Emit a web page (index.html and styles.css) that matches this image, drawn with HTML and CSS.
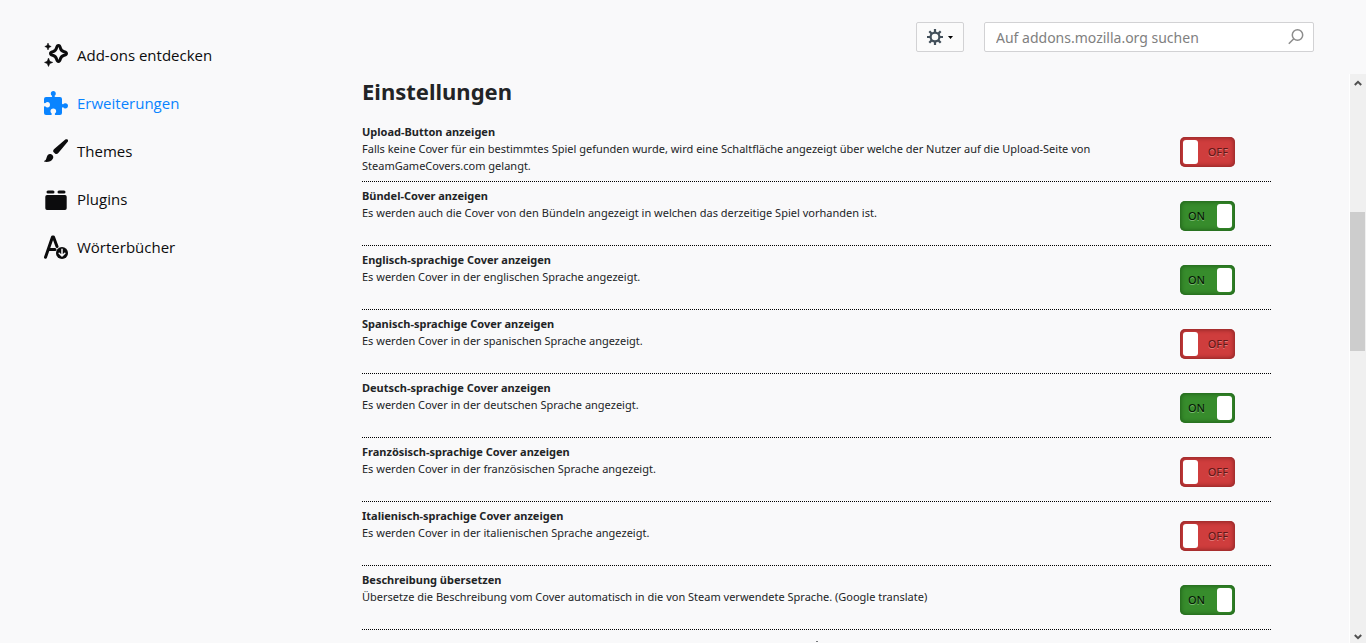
FILE: index.html
```html
<!DOCTYPE html>
<html lang="de">
<head>
<meta charset="utf-8">
<meta name="viewport" content="width=device-width, initial-scale=1">
<title>Einstellungen</title>
<link rel="stylesheet" href="styles.css">
</head>
<body>
<nav class="categories">
  <a class="category" href="#entdecken">
    <svg class="category-icon" viewBox="0 0 24 24"><path d="M14.500 2.500 C15.600 2.500 16 3.500 16.300 4.700 C16.800 7.200 18 8.200 20.200 8.700 C21.800 9.100 22.500 9.600 22.500 10.500 C22.500 11.400 21.700 11.900 20.200 12.300 C18 12.900 16.900 13.900 16.300 16.200 C15.900 17.700 15.500 18.500 14.500 18.500 C13.500 18.500 13 17.700 12.600 16.200 C12 13.900 11 12.900 8.700 12.300 C7.300 11.900 6.500 11.400 6.500 10.500 C6.500 9.600 7.300 9 8.700 8.700 C11 8.100 12.100 7.100 12.600 4.700 C12.900 3.500 13.400 2.500 14.500 2.500Z" fill="none" stroke="currentColor" stroke-width="3"/><path d="M4 0 5 2.600 7.200 3.500 5 4.400 4 7 3 4.400 .8 3.500 3 2.600ZM4.500 15 5.800 18.200 8.800 19.400 5.800 20.600 4.500 23.500 3.200 20.600 .5 19.400 3.200 18.200Z" fill="currentColor" stroke="currentColor" stroke-width=".5"/></svg>
    <span>Add-ons entdecken</span>
  </a>
  <a class="category selected" href="#erweiterungen" aria-current="page">
    <svg class="category-icon" viewBox="0 0 24 24"><path fill="currentColor" d="M0 8 Q0 6 2 6H7.500Q8.500 6 8 4.800 6.800 4.200 6.800 2.700C6.800 1 7.800 0 9.300 0S11.800 1 11.800 2.700Q11.800 4.200 10.600 4.800 10.400 6 11.500 6H16Q18 6 18 8V12.500Q18 13.500 19.200 13.300 19.800 12.200 21.300 12.200C23 12.200 24 13.200 24 14.800S23 17.400 21.300 17.400Q19.800 17.400 19.200 16.200 18 16 18 17V22Q18 24 16 24H11.500Q10.600 24 10.900 22.500 12.200 21.800 12.200 20.300C12.200 18.500 11 17.500 9.300 17.500S6.500 18.500 6.500 20.300Q6.500 21.800 7.700 22.500 8 24 7 24H2Q0 24 0 22V16Q0 15 1.500 15.500 2.200 16.500 3.500 16.500C5.200 16.500 6 15.400 6 13.800S5.200 11 3.500 11Q2.200 11 1.500 12 0 12.500 0 11.500Z"/></svg>
    <span>Erweiterungen</span>
  </a>
  <a class="category" href="#themes">
    <svg class="category-icon" viewBox="0 0 24 24"><path fill="currentColor" d="M23.500.5C24.300 1.200 24.200 2 23.700 2.800L14.500 13.800C13.500 15 12 15.500 11 14.500L9.700 13.300C8.800 12.300 9 11 10.200 9.900L21.300.5C22 0 22.900 0 23.500.5ZM7.200 15.200C9.200 16.200 9.800 17.600 8.800 19.800 7.500 22.500 4 23.200 .6 22.800 0 22.700 0 22 .5 21.800 2 21.200 2.200 20 2.800 18 3.500 15.500 5.100 14.400 7.200 15.200Z"/></svg>
    <span>Themes</span>
  </a>
  <a class="category" href="#plugins">
    <svg class="category-icon" viewBox="0 0 24 24"><path fill="currentColor" d="M4 3.500H9Q10.500 3.500 10.500 5T9 6.500H4Q2.500 6.500 2.500 5T4 3.500ZM15 3.500H20Q21.500 3.500 21.500 5T20 6.500H15Q13.500 6.500 13.500 5T15 3.500ZM3 8H21Q22.700 8 22.700 9.700V21.300Q22.700 23 21 23H3Q1.300 23 1.300 21.300V9.700Q1.300 8 3 8Z"/></svg>
    <span>Plugins</span>
  </a>
  <a class="category" href="#woerterbuecher">
    <svg class="category-icon" viewBox="0 0 24 24"><g fill="none" stroke="currentColor" stroke-width="3" stroke-linecap="round" stroke-linejoin="round"><path d="M1.500 22.300 8.500 2h1L13 11.500M5 14.500h6"/></g><circle cx="18" cy="18" r="6" fill="currentColor"/><path d="M18 14.300v6.200M15.200 18.300 18 21l2.800-2.700" fill="none" stroke="#f9f9fa" stroke-width="1.500" stroke-linecap="round" stroke-linejoin="round"/></svg>
    <span>Wörterbücher</span>
  </a>
</nav>
<div class="content">
  <header class="toolbar">
    <button class="tools" type="button" aria-label="Werkzeuge">
      <svg class="gear" viewBox="0 0 16 16"><circle cx="8" cy="8" r="4.400" fill="none" stroke="currentColor" stroke-width="2.200"/><path d="M8 0v3M8 13v3M0 8h3M13 8h3M2.300 2.300 4.400 4.400M11.600 11.600l2.100 2.100M2.300 13.700 4.400 11.600M11.600 4.400l2.100-2.100" stroke="currentColor" stroke-width="2.200"/></svg>
      <svg class="caret" viewBox="0 0 5 3"><path d="M0 0h5L2.500 3Z"/></svg>
    </button>
    <form class="search" role="search">
      <input class="search-input" type="search" aria-label="Auf addons.mozilla.org suchen" placeholder="Auf addons.mozilla.org suchen">
      <svg class="search-icon" viewBox="0 0 16 16"><g fill="none" stroke="#8c8c8c" stroke-width="1.500"><circle cx="9.500" cy="6" r="5.200"/><path d="M5.800 9.800.8 14.800"/></g></svg>
    </form>
  </header>
  <div class="viewport">
    <main class="settings">
      <h1 class="title">Einstellungen</h1>
      <section class="row"><div class="text"><h2 class="name" id="s1">Upload-Button anzeigen</h2><p class="description">Falls keine Cover für ein bestimmtes Spiel gefunden wurde, wird eine Schaltfläche angezeigt über welche der Nutzer auf die Upload-Seite von SteamGameCovers.com gelangt.</p></div><label class="switch"><input class="switch-input" type="checkbox" aria-labelledby="s1"><span class="off">OFF</span><span class="on">ON</span></label></section>
      <section class="row"><div class="text"><h2 class="name" id="s2">Bündel-Cover anzeigen</h2><p class="description">Es werden auch die Cover von den Bündeln angezeigt in welchen das derzeitige Spiel vorhanden ist.</p></div><label class="switch"><input class="switch-input" type="checkbox" aria-labelledby="s2" checked><span class="off">OFF</span><span class="on">ON</span></label></section>
      <section class="row"><div class="text"><h2 class="name" id="s3">Englisch-sprachige Cover anzeigen</h2><p class="description">Es werden Cover in der englischen Sprache angezeigt.</p></div><label class="switch"><input class="switch-input" type="checkbox" aria-labelledby="s3" checked><span class="off">OFF</span><span class="on">ON</span></label></section>
      <section class="row"><div class="text"><h2 class="name" id="s4">Spanisch-sprachige Cover anzeigen</h2><p class="description">Es werden Cover in der spanischen Sprache angezeigt.</p></div><label class="switch"><input class="switch-input" type="checkbox" aria-labelledby="s4"><span class="off">OFF</span><span class="on">ON</span></label></section>
      <section class="row"><div class="text"><h2 class="name" id="s5">Deutsch-sprachige Cover anzeigen</h2><p class="description">Es werden Cover in der deutschen Sprache angezeigt.</p></div><label class="switch"><input class="switch-input" type="checkbox" aria-labelledby="s5" checked><span class="off">OFF</span><span class="on">ON</span></label></section>
      <section class="row"><div class="text"><h2 class="name" id="s6">Französisch-sprachige Cover anzeigen</h2><p class="description">Es werden Cover in der französischen Sprache angezeigt.</p></div><label class="switch"><input class="switch-input" type="checkbox" aria-labelledby="s6"><span class="off">OFF</span><span class="on">ON</span></label></section>
      <section class="row"><div class="text"><h2 class="name" id="s7">Italienisch-sprachige Cover anzeigen</h2><p class="description">Es werden Cover in der italienischen Sprache angezeigt.</p></div><label class="switch"><input class="switch-input" type="checkbox" aria-labelledby="s7"><span class="off">OFF</span><span class="on">ON</span></label></section>
      <section class="row"><div class="text"><h2 class="name" id="s8">Beschreibung übersetzen</h2><p class="description">Übersetze die Beschreibung vom Cover automatisch in die von Steam verwendete Sprache. (Google translate)</p></div><label class="switch"><input class="switch-input" type="checkbox" aria-labelledby="s8" checked><span class="off">OFF</span><span class="on">ON</span></label></section>
      <div class="mark"></div>
    </main>
    <div class="scrollbar" aria-hidden="true">
      <svg class="arrow" viewBox="0 0 8 6"><path d="M.8 5 4 1.800 7.200 5" fill="none" stroke="#505050" stroke-width="2"/></svg>
      <div class="track"><div class="thumb"></div></div>
      <svg class="arrow" viewBox="0 0 8 6"><path d="M.8 1 4 4.200 7.200 1" fill="none" stroke="#505050" stroke-width="2"/></svg>
    </div>
  </div>
</div>
</body>
</html>
```
FILE: styles.css
```css
* { box-sizing: border-box; }

body {
  margin: 0;
  height: 100vh;
  display: flex;
  overflow: hidden;
  background: #f9f9fa;
  color: #222426;
  font-family: "Noto Sans", "Open Sans", sans-serif;
}

.categories {
  flex: 0 0 334px;
  padding: 31px 0 0 44px;
}

.category {
  display: flex;
  align-items: center;
  gap: 9px;
  height: 48px;
  color: #0c0c0d;
  font-family: "Open Sans", "Noto Sans", sans-serif;
  font-size: 15px;
  text-decoration: none;
}

.category.selected { color: #0a84ff; }
.category-icon { width: 24px; height: 24px; }

.content {
  flex: 1;
  min-width: 0;
  display: flex;
  flex-direction: column;
}

.toolbar {
  flex: none;
  display: flex;
  justify-content: flex-end;
  gap: 20px;
  height: 74px;
  padding: 22px 52px 0 0;
}

.tools {
  display: flex;
  align-items: center;
  justify-content: center;
  gap: 5px;
  width: 48px;
  height: 30px;
  padding: 0;
  border: 1px solid #d2d2d4;
  border-radius: 2px;
  background: #fbfbfb;
  color: #424f5a;
}

.gear { width: 16px; height: 16px; }
.caret { width: 5px; height: 3px; }

.search {
  display: flex;
  align-items: center;
  width: 330px;
  height: 30px;
  padding: 0 9px 0 11px;
  border: 1px solid #d2d2d4;
  border-radius: 2px;
  background: #fff;
}

.search-input {
  flex: 1;
  min-width: 0;
  padding: 0;
  border: 0;
  outline: 0;
  background: none;
  font-family: inherit;
  font-size: 14px;
}

.search-input::placeholder { color: #808080; opacity: 1; }
.search-icon { width: 16px; height: 16px; }

.viewport {
  flex: 1;
  min-height: 0;
  display: flex;
}

.settings {
  flex: 1;
  min-width: 0;
  padding: 0 78px 0 28px;
  overflow: hidden;
}

.title {
  margin: 0;
  height: 44px;
  font-size: 22px;
  line-height: 34px;
}

.row {
  display: flex;
  justify-content: space-between;
  min-height: 64px;
  padding: 5px 36px 7px 0;
  border-bottom: 1px dotted #000;
  font-size: 11px;
  line-height: 17px;
}

.text { flex: 1; padding-right: 40px; }
.name { margin: 0; font-size: inherit; font-weight: bold; }
.description { margin: 0; }

.switch {
  position: relative;
  flex: none;
  width: 55px;
  height: 30px;
  margin-top: 14px;
}

.switch-input {
  appearance: none;
  display: block;
  width: 55px;
  height: 30px;
  margin: 0;
  padding: 3px;
  border-radius: 5px;
  background: #cf3d3d;
  box-shadow: inset 0 0 4px 1px #8b2525;
}

.switch-input::before {
  content: "";
  display: block;
  width: 15px;
  height: 24px;
  border-radius: 3px;
  background: #fff;
}

.switch-input:checked {
  background: #378c2c;
  box-shadow: inset 0 0 4px 1px #20621a;
}

.switch-input:checked::before { margin-left: auto; }

.off, .on {
  position: absolute;
  top: 6px;
  font-size: 11px;
  font-weight: 500;
  line-height: 17px;
}

.off { right: 7px; color: #641717; text-shadow: 0 1px #df7777; }
.on { left: 8px; color: #061b04; text-shadow: 0 1px #78b770; }
.switch-input:checked ~ .off, .switch-input:not(:checked) ~ .on { display: none; }

.mark {
  width: 2px;
  height: 1px;
  margin: 11px auto 0;
  background: #77797b;
}

.scrollbar {
  flex: 0 0 17px;
  display: flex;
  flex-direction: column;
  align-items: center;
  padding: 6px 1px 3px 0;
  border-left: 1px solid #fff;
  background: #f0f0f0;
}

.arrow { flex: none; width: 8px; height: 6px; }
.track { flex: 1; width: 100%; padding-top: 126px; }
.thumb { height: 139px; background: #cdcdcd; }
```
